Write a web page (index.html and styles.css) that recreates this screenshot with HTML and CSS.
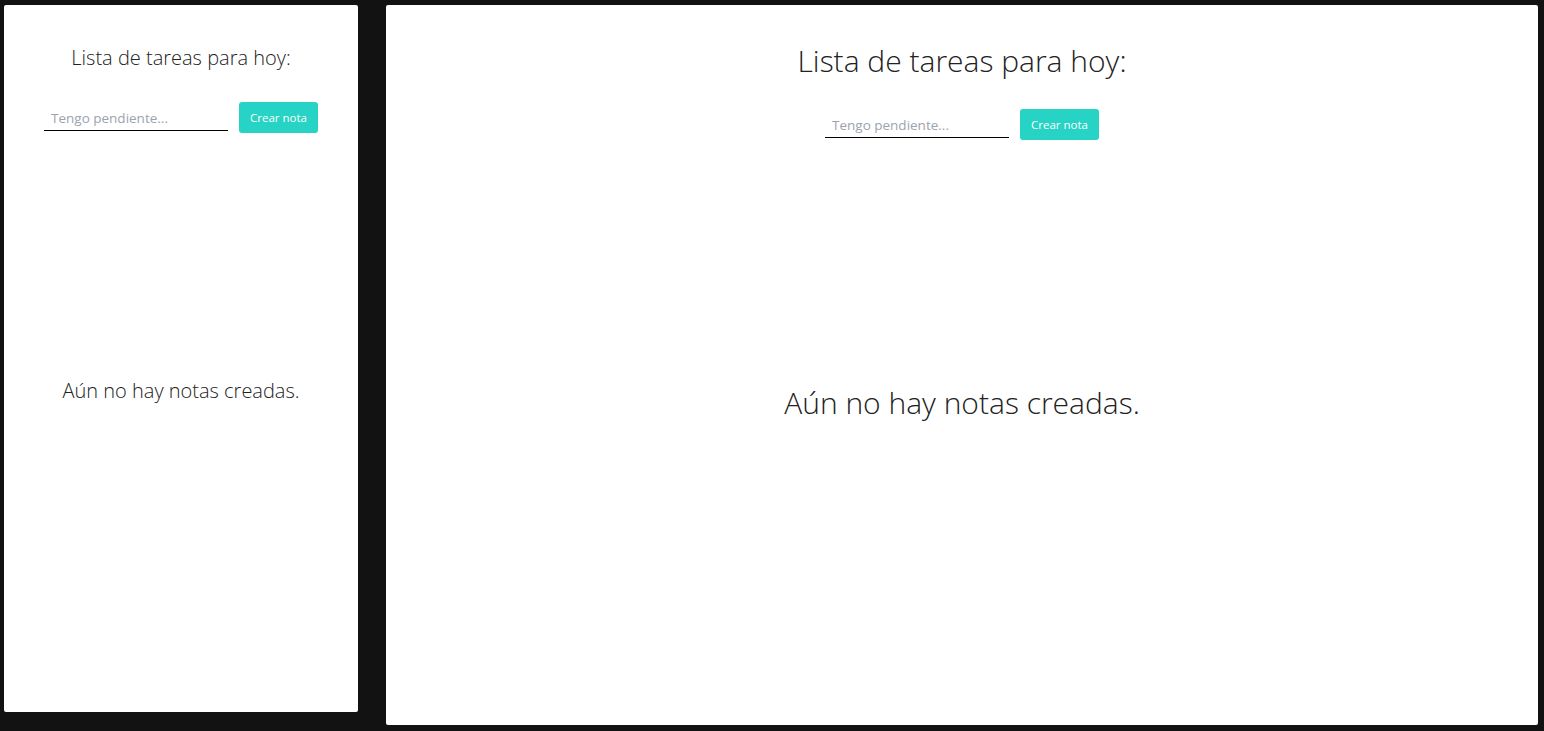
FILE: index.html
```html
<!DOCTYPE html>
<html lang="es">
<head>
<meta charset="utf-8">
<title>Lista de tareas</title>
<link rel="stylesheet" href="styles.css">
</head>
<body>
<div class="stage">
  <section class="app app-small">
    <h1 class="title">Lista de tareas para hoy:</h1>
    <form class="note-form">
      <input class="note-input" type="text" placeholder="Tengo pendiente...">
      <button class="note-btn" type="button">Crear nota</button>
    </form>
    <div class="empty">
      <p class="empty-text">Aún no hay notas creadas.</p>
    </div>
  </section>
  <section class="app app-large">
    <h1 class="title">Lista de tareas para hoy:</h1>
    <form class="note-form">
      <input class="note-input" type="text" placeholder="Tengo pendiente...">
      <button class="note-btn" type="button">Crear nota</button>
    </form>
    <div class="empty">
      <p class="empty-text">Aún no hay notas creadas.</p>
    </div>
  </section>
</div>
</body>
</html>
```
FILE: styles.css
```css
html, body {
  margin: 0;
  padding: 0;
  background: #121212;
  height: 100%;
}
.stage {
  display: flex;
  align-items: flex-start;
  gap: 28px;
  padding: 5px 0 0 4px;
}
.app {
  background: #ffffff;
  border-radius: 2px;
  display: flex;
  flex-direction: column;
  align-items: center;
  font-family: "Open Sans", "Noto Sans", sans-serif;
  color: #222;
}
.app-small {
  width: 354px;
  height: 707px;
}
.app-large {
  width: 1152px;
  height: 720px;
}
.title {
  margin: 0;
  font-weight: 300;
  line-height: 1.2;
}
.app-small .title {
  font-size: 20px;
  margin-top: 41px;
}
.app-large .title {
  font-size: 30px;
  margin-top: 38px;
}
.note-form {
  display: flex;
  align-items: center;
  gap: 11px;
}
.app-small .note-form { margin-top: 32px; }
.app-large .note-form { margin-top: 30px; }
.note-input {
  width: 184px;
  height: 24px;
  box-sizing: border-box;
  border: none;
  border-bottom: 1px solid #000;
  padding: 0 7px;
  font-family: "Open Sans", "Noto Sans", sans-serif;
  font-size: 13.5px;
  outline: none;
  background: transparent;
  margin-top: 2px;
}
.note-input::placeholder {
  color: #9ca3af;
}
.note-btn {
  width: 79px;
  height: 31px;
  border: none;
  border-radius: 3px;
  background: #26d3c4;
  color: #fff;
  font-family: "Open Sans", "Noto Sans", sans-serif;
  font-size: 11.5px;
  font-weight: 500;
  padding: 0;
}
.empty {
  flex: 1;
  display: flex;
  justify-content: center;
  width: 100%;
}
.empty-text {
  margin: 0;
  font-weight: 300;
  line-height: 1.2;
}
.app-small .empty-text {
  font-size: 20px;
  margin-top: 246px;
}
.app-large .empty-text {
  font-size: 30px;
  margin-top: 245px;
}
```
